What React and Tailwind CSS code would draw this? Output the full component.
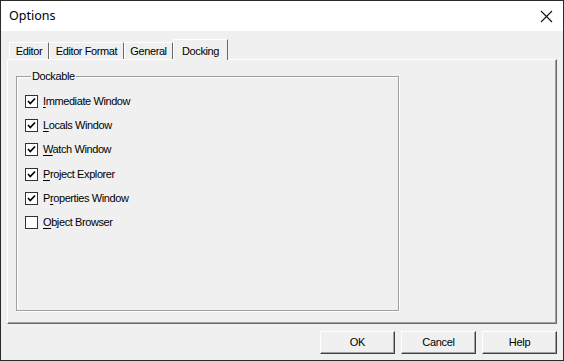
import React from "react";

const font = { fontFamily: '"Liberation Sans", Arial, sans-serif' };

function U({ children }) {
  return <span className="underline underline-offset-[2px] decoration-[1px]">{children}</span>;
}

function Check({ checked, label }) {
  return (
    <div className="flex items-center h-[24.3px]">
      <div className="w-[13px] h-[13px] border border-[#333333] bg-white flex items-center justify-center">
        {checked && (
          <svg width="11" height="11" viewBox="0 0 11 11">
            <path d="M2 5 L4.3 7.5 L9 2.5" fill="none" stroke="#000" strokeWidth="1.7" />
          </svg>
        )}
      </div>
      <span className="ml-[5px] text-[11px] tracking-[-0.4px] text-black leading-none">{label}</span>
    </div>
  );
}

function Tab({ label, w }) {
  return (
    <div
      className="h-[17px] border-l border-t border-white border-r border-r-[#696969] flex items-center justify-center text-[11px] tracking-[-0.4px] text-black rounded-t-[1px]"
      style={{ width: w }}
    >
      {label}
    </div>
  );
}

function Btn({ label }) {
  return (
    <div className="w-[75px] h-[23px] border border-t-white border-l-white border-r-[#404040] border-b-[#404040] shadow-[inset_-1px_-1px_0_#a0a0a0] bg-[#f0f0f0] flex items-center justify-center text-[11px] tracking-[-0.3px] text-black">
      {label}
    </div>
  );
}

export default function App() {
  return (
    <div className="w-[564px] h-[361px] border border-[#2b2b2b] flex flex-col bg-[#f0f0f0]" style={font}>
      <div className="h-[30px] bg-white flex items-center justify-between pl-[8px] pr-[10px] shrink-0">
        <span className="text-[12.5px] text-black" style={{ fontFamily: '"Noto Sans", "Open Sans", sans-serif' }}>Options</span>
        <svg width="13" height="13" viewBox="0 0 13 13">
          <path d="M1 1 L12 12 M12 1 L1 12" stroke="#111" strokeWidth="1.1" />
        </svg>
      </div>
      <div className="flex-1 flex flex-col px-[6px] pt-[7px]">
        <div className="flex items-end h-[21px] pl-[2px] relative z-10">
          <Tab label="Editor" w={40} />
          <Tab label="Editor Format" w={75} />
          <Tab label="General" w={49} />
          <div className="h-[21px] w-[55px] border-l border-t border-white border-r border-r-[#696969] bg-[#f0f0f0] flex items-start pt-[3px] justify-center text-[11px] tracking-[-0.4px] text-black -mb-[1px]">
            Docking
          </div>
        </div>
        <div className="h-[265px] border-l border-t border-white border-r border-b border-r-[#696969] border-b-[#696969] shadow-[inset_-1px_-1px_0_#a0a0a0] pl-[8px] pt-[9px]">
          <fieldset className="w-[383px] h-[242px] border border-[#a0a0a0] shadow-[inset_1px_1px_0_#ffffff,1px_1px_0_#ffffff] pl-[8px] pt-[6px]">
            <legend className="ml-[6px] px-[1px] text-[11px] tracking-[-0.4px] text-black leading-[14px]">Dockable</legend>
            <Check checked label={<><U>I</U>mmediate Window</>} />
            <Check checked label={<><U>L</U>ocals Window</>} />
            <Check checked label={<><U>W</U>atch Window</>} />
            <Check checked label={<><U>P</U>roject Explorer</>} />
            <Check checked label={<>P<U>r</U>operties Window</>} />
            <Check label={<><U>O</U>bject Browser</>} />
          </fieldset>
        </div>
        <div className="flex justify-end gap-[6px] pt-[7px]">
          <Btn label="OK" />
          <Btn label="Cancel" />
          <Btn label="Help" />
        </div>
      </div>
    </div>
  );
}
